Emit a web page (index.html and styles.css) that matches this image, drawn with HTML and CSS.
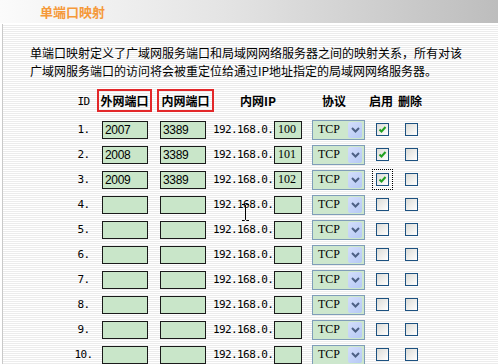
FILE: index.html
```html
<!DOCTYPE html>
<html lang="zh-CN">
<head>
<meta charset="utf-8">
<title>单端口映射</title>
<link rel="stylesheet" href="styles.css">
</head>
<body>
<div class="titlebar"><span class="title">单端口映射</span></div>
<div class="main">
  <p class="intro">单端口映射定义了广域网服务端口和局域网网络服务器之间的映射关系，所有对该<br>广域网服务端口的访问将会被重定位给通过IP地址指定的局域网网络服务器。</p>
  <div class="grid" id="grid">
    <div class="h h-id">ID</div>
    <div class="h h-ext boxed">外网端口</div>
    <div class="h h-int boxed">内网端口</div>
    <div class="h h-ip">内网IP</div>
    <div class="h h-proto">协议</div>
    <div class="h h-en">启用</div>
    <div class="h h-del">删除</div>
  </div>
  <svg class="ibeam" width="9" height="17" viewBox="0 0 9 17"><path d="M1 0.5h2.5l1 1 1-1H8M4.5 1.5v14M1 16.5h2.5l1-1 1 1H8" fill="none" stroke="#000" stroke-width="1"/></svg>
</div>
<script>
(function(){
  var data = [
    ["2007","3389","100",true],
    ["2008","3389","101",true],
    ["2009","3389","102",true],
    ["","","",false],["","","",false],["","","",false],["","","",false],["","","",false],["","","",false],["","","",false]
  ];
  var check = '<svg width="11" height="11" viewBox="0 0 11 11"><path d="M2.5 5.5l2 2 4-4.5" fill="none" stroke="#21a121" stroke-width="2"/></svg>';
  var arrow = '<svg width="9" height="6" viewBox="0 0 9 6"><path d="M1 1l3.5 3.5L8 1" fill="none" stroke="#4d6185" stroke-width="2"/></svg>';
  var html = "";
  data.forEach(function(r, i){
    html += '<div class="c c-id">' + (i+1) + '.</div>';
    html += '<div class="c c-ext"><span class="inp port">' + r[0] + '</span></div>';
    html += '<div class="c c-int"><span class="inp port">' + r[1] + '</span></div>';
    html += '<div class="c c-ip"><span class="ippre">192.168.0.</span><span class="inp oct">' + r[2] + '</span></div>';
    html += '<div class="c c-proto"><span class="sel"><span class="sel-t">TCP</span><span class="sel-b">' + arrow + '</span></span></div>';
    html += '<div class="c c-en"><span class="cb' + (i===2?' focus':'') + '">' + (r[3]?check:'') + '</span></div>';
    html += '<div class="c c-del"><span class="cb"></span></div>';
  });
  document.getElementById("grid").insertAdjacentHTML("beforeend", html);
})();
</script>
</body>
</html>
```
FILE: styles.css
```css
html, body {
  margin: 0;
  padding: 0;
  background: #fff;
}
body {
  width: 498px;
  height: 364px;
  overflow: hidden;
  font-family: "Noto Sans CJK SC", "Liberation Sans", sans-serif;
  font-size: 12px;
  color: #000;
}
.titlebar {
  height: 23px;
  background: linear-gradient(to right, #fbfbfb 0%, #e4e4e4 45%, #bdbdbd 100%);
  display: flex;
  align-items: center;
  padding-left: 40px;
}
.title {
  font-weight: bold;
  font-size: 13px;
  color: #f5993a;
  line-height: 1;
}
.main {
  position: relative;
  margin-left: 2px;
  margin-top: 1px;
  border-left: 1px solid #c9c9c9;
  height: 340px;
  background: repeating-linear-gradient(to bottom, #ffffff 0, #ffffff 1px, #ececec 1px, #ececec 2px);
}
.intro {
  margin: 0;
  padding: 20px 0 0 27px;
  line-height: 18px;
  font-size: 12px;
}
.grid {
  margin: 9px 0 0 67px;
  display: grid;
  grid-template-columns: 27px 58px 57px 95px 60px 29px 30px;
  grid-template-rows: 28px;
  grid-auto-rows: 25px;
  align-items: center;
}
.h {
  font-weight: bold;
  font-size: 12px;
  line-height: 16px;
  white-space: nowrap;
  align-self: start;
  margin-top: 4px;
}
.h-id {
  font-weight: normal;
  font-family: "DejaVu Sans Mono", monospace;
  font-size: 11px;
  letter-spacing: -0.6px;
  justify-self: center;
  margin-top: 5px;
}
.boxed {
  margin-top: 0;
  box-sizing: border-box;
  height: 23px;
  border: 2px solid #e3282a;
  display: flex;
  align-items: center;
  justify-content: center;
}
.h-ext { width: 55px; }
.h-int { width: 57px; margin-left: 2px; }
.h-ip { margin-left: 28px; }
.h-proto { margin-left: 15px; }
.h-en, .h-del { margin-left: 2px; }

.c {
  display: flex;
  align-items: center;
  height: 25px;
}
.c-id {
  justify-content: center;
  font-family: "DejaVu Sans Mono", monospace;
  font-size: 11px;
  letter-spacing: -0.6px;
}
.inp {
  box-sizing: border-box;
  height: 18px;
  border: 1px solid #1a1a1a;
  background: #c9e6c9;
  display: flex;
  align-items: center;
}
.port {
  width: 46px;
  margin-left: 5px;
  padding-left: 2px;
  font-family: "Liberation Sans", Arial, sans-serif;
  font-size: 12px;
  letter-spacing: -0.3px;
}
.ippre {
  margin-left: 1px;
  font-family: "DejaVu Sans Mono", monospace;
  font-size: 11px;
  letter-spacing: -0.6px;
  width: 60px;
}
.oct {
  width: 28px;
  margin-left: 1px;
  padding-left: 3px;
  font-family: "Liberation Serif", serif;
  font-size: 12px;
}
.sel {
  box-sizing: border-box;
  margin-left: 5px;
  width: 53px;
  height: 20px;
  border: 1px solid #7f9db9;
  background: #cde7cd;
  display: flex;
  align-items: center;
  padding: 1px 2px 1px 0;
}
.sel-t {
  flex: 1;
  padding-left: 5px;
  font-family: "Liberation Serif", serif;
  font-size: 12px;
}
.sel-b {
  width: 14px;
  height: 16px;
  border-radius: 2px;
  background: linear-gradient(135deg, #d3defb, #b6c9f5);
  display: flex;
  align-items: center;
  justify-content: center;
}
.sel-b svg { display: block; }
.cb {
  box-sizing: border-box;
  width: 13px;
  height: 13px;
  margin-left: 9px;
  border: 1px solid #1c5180;
  background: linear-gradient(135deg, #dcdcd7, #ffffff);
  display: flex;
  align-items: center;
  justify-content: center;
}
.cb svg { display: block; }
.focus {
  outline: 1px dotted #000;
  outline-offset: 3px;
}
.ibeam {
  position: absolute;
  left: 238px;
  top: 180px;
}
```
